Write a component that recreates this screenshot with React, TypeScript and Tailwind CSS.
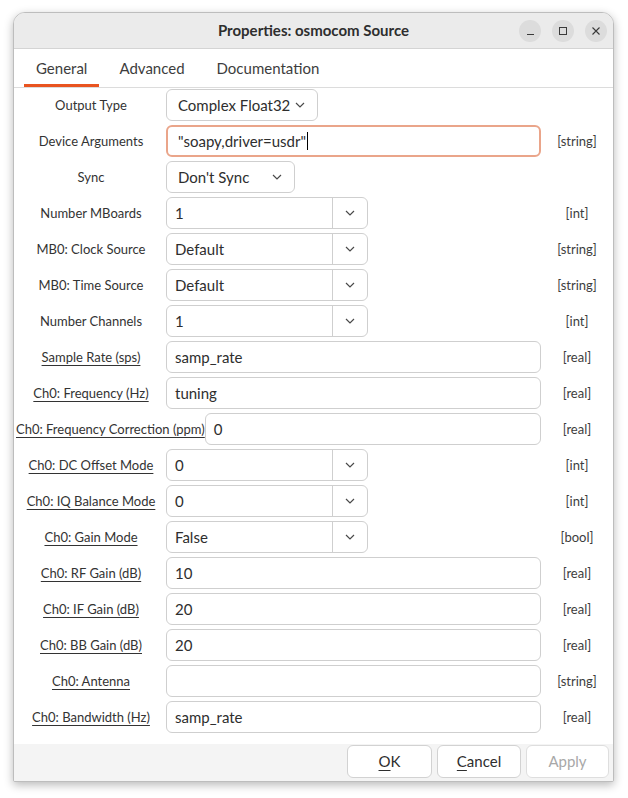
import React from "react";

type Row = {
  label: string;
  kind: "combo" | "entry" | "comboEntry" | "focus";
  value: string;
  type?: string;
  link?: boolean;
  width?: string;
};

const rows: Row[] = [
  { label: "Output Type", kind: "combo", value: "Complex Float32", width: "w-[152px]" },
  { label: "Device Arguments", kind: "focus", value: '"soapy,driver=usdr"', type: "[string]" },
  { label: "Sync", kind: "combo", value: "Don't Sync", width: "w-[129px]" },
  { label: "Number MBoards", kind: "comboEntry", value: "1", type: "[int]" },
  { label: "MB0: Clock Source", kind: "comboEntry", value: "Default", type: "[string]" },
  { label: "MB0: Time Source", kind: "comboEntry", value: "Default", type: "[string]" },
  { label: "Number Channels", kind: "comboEntry", value: "1", type: "[int]" },
  { label: "Sample Rate (sps)", kind: "entry", value: "samp_rate", type: "[real]", link: true },
  { label: "Ch0: Frequency (Hz)", kind: "entry", value: "tuning", type: "[real]", link: true },
  { label: "Ch0: Frequency Correction (ppm)", kind: "entry", value: "0", type: "[real]", link: true },
  { label: "Ch0: DC Offset Mode", kind: "comboEntry", value: "0", type: "[int]", link: true },
  { label: "Ch0: IQ Balance Mode", kind: "comboEntry", value: "0", type: "[int]", link: true },
  { label: "Ch0: Gain Mode", kind: "comboEntry", value: "False", type: "[bool]", link: true },
  { label: "Ch0: RF Gain (dB)", kind: "entry", value: "10", type: "[real]", link: true },
  { label: "Ch0: IF Gain (dB)", kind: "entry", value: "20", type: "[real]", link: true },
  { label: "Ch0: BB Gain (dB)", kind: "entry", value: "20", type: "[real]", link: true },
  { label: "Ch0: Antenna", kind: "entry", value: "", type: "[string]", link: true },
  { label: "Ch0: Bandwidth (Hz)", kind: "entry", value: "samp_rate", type: "[real]", link: true },
];

const Chevron = () => (
  <svg width="10" height="6" viewBox="0 0 10 6" className="shrink-0">
    <path d="M1 1 L5 5 L9 1" fill="none" stroke="#4a4a4a" strokeWidth="1.2" />
  </svg>
);

const Control = ({ row }: { row: Row }) => {
  if (row.kind === "combo") {
    return (
      <div
        className={`${row.width} h-[32px] flex items-center justify-between pl-[11px] pr-[12px] border border-[#cfcfcf] rounded-[6px] bg-white text-[15px] text-[#2e2e2e]`}
      >
        <span>{row.value}</span>
        <Chevron />
      </div>
    );
  }
  if (row.kind === "comboEntry") {
    return (
      <div className="w-[202px] h-[32px] flex border border-[#cfcfcf] rounded-[6px] bg-white text-[15px] text-[#2e2e2e]">
        <div className="flex-1 flex items-center pl-[8px]">{row.value}</div>
        <div className="w-[35px] flex items-center justify-center border-l border-[#cfcfcf]">
          <Chevron />
        </div>
      </div>
    );
  }
  if (row.kind === "focus") {
    return (
      <div className="flex-1 h-[32px] flex items-center pl-[10px] border-2 border-[#eaa58a] rounded-[6px] bg-white text-[15px] text-[#2e2e2e]">
        <span>{row.value}</span>
        <span className="w-[1px] h-[18px] bg-black ml-[1px]" />
      </div>
    );
  }
  return (
    <div className="flex-1 h-[32px] flex items-center pl-[8px] border border-[#cfcfcf] rounded-[6px] bg-white text-[15px] text-[#2e2e2e]">
      {row.value}
    </div>
  );
};

const App = () => {
  return (
    <div
      className="w-[628px] h-[798px] bg-white pt-[12px] pl-[13px]"
      style={{ fontFamily: "Lato, 'Noto Sans', sans-serif" }}
    >
      <div className="w-[601px] h-[770px] flex flex-col border border-[#bdbdbd] rounded-t-[12px] rounded-b-[2px] bg-white shadow-[0_3px_10px_rgba(0,0,0,0.28)] overflow-hidden">
        {/* title bar */}
        <div className="h-[36px] shrink-0 relative flex items-center justify-center bg-[#ebebeb] border-b border-[#d4d4d4]">
          <span className="text-[15px] font-bold text-[#2e2e2e] -mt-[1px]">Properties: osmocom Source</span>
          <div className="absolute right-[6px] top-[7px] flex gap-[11px]">
            <div className="w-[22px] h-[22px] rounded-full bg-[#dcdcdc] flex items-end justify-center pb-[7px]">
              <div className="w-[7px] h-[1px] bg-[#3a3a3a]" />
            </div>
            <div className="w-[22px] h-[22px] rounded-full bg-[#dcdcdc] flex items-center justify-center">
              <div className="w-[8px] h-[8px] border border-[#3a3a3a]" />
            </div>
            <div className="w-[22px] h-[22px] rounded-full bg-[#dcdcdc] flex items-center justify-center">
              <svg width="8" height="8" viewBox="0 0 8 8">
                <path d="M0.5 0.5 L7.5 7.5 M7.5 0.5 L0.5 7.5" stroke="#3a3a3a" strokeWidth="1.1" />
              </svg>
            </div>
          </div>
        </div>

        {/* tabs */}
        <div className="h-[39px] shrink-0 flex items-stretch gap-[8px] pl-[10px] border-b border-[#dcdcdc] text-[15px] text-[#3d3d3d]">
          <div className="px-[12px] flex items-center border-b-[3px] border-[#e95420] pt-[3px]">General</div>
          <div className="px-[12px] flex items-center pt-[3px] border-b-[3px] border-transparent">Advanced</div>
          <div className="px-[12px] flex items-center pt-[3px] border-b-[3px] border-transparent">Documentation</div>
        </div>

        {/* rows */}
        <div className="flex-1 flex flex-col">
          {rows.map((row) => (
            <div key={row.label} className="h-[36px] shrink-0 flex items-start pt-[1px]">
              <div className="min-w-[152px] h-[32px] pl-[2px] pt-[2px] flex items-center justify-center text-[13px] text-[#333333] whitespace-nowrap">
                <span className={row.link ? "underline underline-offset-[3px] decoration-[1px]" : ""}>
                  {row.label}
                </span>
              </div>
              <div className="flex-1 flex">
                <Control row={row} />
              </div>
              <div className="w-[72px] h-[32px] pt-[2px] flex items-center justify-center text-[13px] text-[#3d3d3d]">
                {row.type}
              </div>
            </div>
          ))}
        </div>

        {/* footer */}
        <div className="h-[37px] shrink-0 bg-[#f4f4f4] flex items-start justify-end gap-[5px] pr-[4px] pt-[1px] text-[15px]">
          <div className="w-[85px] h-[33px] flex items-center justify-center rounded-[6px] border border-[#d2d2d2] bg-white text-[#2e2e2e]">
            <span><span className="underline underline-offset-[3px]">O</span>K</span>
          </div>
          <div className="w-[84px] h-[33px] flex items-center justify-center rounded-[6px] border border-[#d2d2d2] bg-white text-[#2e2e2e]">
            <span><span className="underline underline-offset-[3px]">C</span>ancel</span>
          </div>
          <div className="w-[83px] h-[33px] flex items-center justify-center rounded-[6px] border border-[#dedede] bg-white text-[#a8a8a8]">
            Apply
          </div>
        </div>
      </div>
    </div>
  );
};

export default App;
